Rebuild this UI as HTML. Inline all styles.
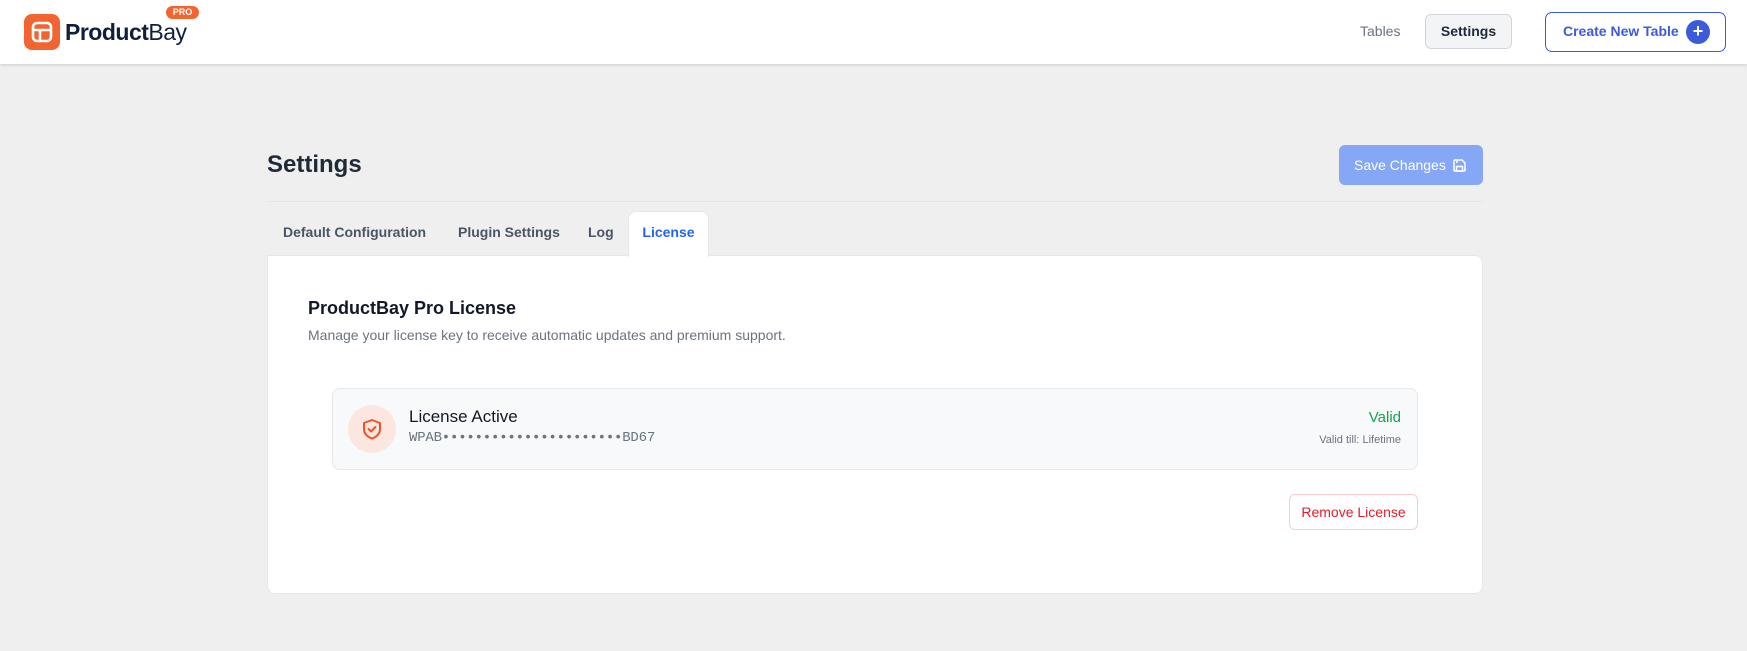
<!DOCTYPE html>
<html><head><meta charset="utf-8"><style>
*{box-sizing:border-box;margin:0;padding:0}
body{width:1747px;height:651px;background:#efefef;font-family:"Liberation Sans",sans-serif;position:relative;overflow:hidden;color:#1f2937}
.hdr{position:absolute;left:0;top:0;width:1747px;height:64px;background:#fff;box-shadow:0 1px 3px rgba(0,0,0,.15)}
.abs{position:absolute}
</style></head><body>
<div class="hdr">
  <div class="abs" style="left:24px;top:14px;width:36px;height:36px;background:#f26430;border-radius:8px">
    <svg width="36" height="36" viewBox="0 0 36 36"><rect x="9" y="9" width="18" height="18" rx="4" fill="none" stroke="#fff" stroke-width="2.6"/><line x1="9" y1="16" x2="27" y2="16" stroke="#fff" stroke-width="2.6"/><line x1="16" y1="16" x2="16" y2="27" stroke="#fff" stroke-width="2.6"/></svg>
  </div>
  <div class="abs" style="left:65px;top:19px;font-size:23px;color:#0f1f3d;letter-spacing:-0.5px"><b>Product</b>Bay</div>
  <div class="abs" style="left:166px;top:6px;width:33px;height:13px;background:#f26430;border-radius:7px;color:#fff;font-size:9px;font-weight:bold;text-align:center;line-height:13px">PRO</div>
  <div class="abs" style="left:1360px;top:23px;font-size:14px;color:#6b7280">Tables</div>
  <div class="abs" style="left:1425px;top:14px;width:87px;height:35px;background:#f3f4f6;border:1px solid #d1d5db;border-radius:6px;font-size:14px;font-weight:bold;text-align:center;line-height:33px;color:#1f2937">Settings</div>
  <div class="abs" style="left:1545px;top:12px;width:181px;height:40px;border:1.5px solid #3b5bdb;border-radius:7px;color:#3b5bdb;font-size:14px;font-weight:bold;line-height:37px;padding-left:17px">Create New Table
    <span class="abs" style="left:140px;top:7px;width:24px;height:24px;border-radius:50%;background:#3b5bdb;color:#fff;text-align:center;line-height:23px;font-size:18px">+</span></div>
</div>
<div class="abs" style="left:267px;top:151px;font-size:24px;font-weight:bold;color:#1f2937">Settings</div>
<div class="abs" style="left:1339px;top:145px;width:144px;height:40px;background:#85a7f6;border-radius:6px;color:#fff;font-size:14px;line-height:40px;padding-left:15px">Save Changes
  <svg class="abs" style="left:113px;top:13px" width="15" height="15" viewBox="0 0 15 15" fill="none" stroke="#fff" stroke-width="1.5"><path d="M2 3a1 1 0 0 1 1-1h7l3 3v7a1 1 0 0 1-1 1H3a1 1 0 0 1-1-1z"/><rect x="4.5" y="8.5" width="6" height="4.5"/><line x1="5" y1="2.5" x2="5" y2="5"/></svg></div>
<div class="abs" style="left:267px;top:201px;width:1216px;height:1px;background:#e5e5e5"></div>
<div class="abs" style="left:283px;top:224px;font-size:14px;font-weight:bold;color:#4b5563">Default Configuration</div>
<div class="abs" style="left:458px;top:224px;font-size:14px;font-weight:bold;color:#4b5563">Plugin Settings</div>
<div class="abs" style="left:588px;top:224px;font-size:14px;font-weight:bold;color:#4b5563">Log</div>
<div class="abs" style="left:267px;top:255px;width:1216px;height:339px;background:#fff;border:1px solid #e5e7eb;border-radius:0 8px 8px 8px"></div>
<div class="abs" style="left:628px;top:211px;width:81px;height:46px;background:#fff;border:1px solid #e5e7eb;border-bottom:none;border-radius:8px 8px 0 0;color:#2563eb;font-size:14px;font-weight:bold;text-align:center;line-height:40px">License</div>
<div class="abs" style="left:308px;top:298px;font-size:18px;font-weight:bold;color:#111827">ProductBay Pro License</div>
<div class="abs" style="left:308px;top:327px;font-size:14px;color:#6b7280">Manage your license key to receive automatic updates and premium support.</div>
<div class="abs" style="left:332px;top:388px;width:1086px;height:82px;background:#f8f9fa;border:1px solid #e5e7eb;border-radius:8px"></div>
<div class="abs" style="left:348px;top:405px;width:48px;height:48px;border-radius:50%;background:#fbe7df">
  <svg width="48" height="48" viewBox="0 0 48 48" fill="none" stroke="#f0532b" stroke-width="2" stroke-linejoin="round" stroke-linecap="round"><path d="M24 15l8 3v6c0 5-4 8-8 9.5-4-1.5-8-4.5-8-9.5v-6z"/><path d="M20.5 24l2.5 2.5 4.5-4.5"/></svg></div>
<div class="abs" style="left:409px;top:407px;font-size:17px;color:#111827">License Active</div>
<div class="abs" style="left:409px;top:430px;font-size:14px;font-family:'Liberation Mono',monospace;color:#6b7280;letter-spacing:-0.2px">WPAB••••••••••••••••••••••BD67</div>
<div class="abs" style="left:1300px;top:409px;width:101px;text-align:right;font-size:15px;color:#16a34a">Valid</div>
<div class="abs" style="left:1250px;top:434px;width:151px;text-align:right;font-size:11px;color:#6b7280">Valid till: Lifetime</div>
<div class="abs" style="left:1289px;top:494px;width:129px;height:36px;border:1px solid #fecaca;border-radius:6px;color:#e11d2a;font-size:14px;text-align:center;line-height:34px">Remove License</div>
</body></html>
